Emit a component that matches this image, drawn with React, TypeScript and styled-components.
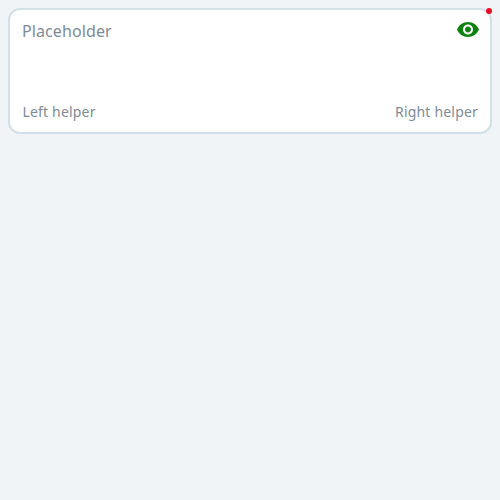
import React from "react";
import styled, { createGlobalStyle } from "styled-components";

const GlobalStyle = createGlobalStyle`
  body {
    margin: 0;
    padding: 8px;
    min-height: 100vh;
    box-sizing: border-box;
    background: #f0f4f7;
    font-family: "Noto Sans", sans-serif;
  }
`;

const Field = styled.label`
  position: relative;
  display: flex;
  flex-direction: column;
  justify-content: space-between;
  box-sizing: border-box;
  height: 126px;
  padding: 8px 12px 9px 12px;
  border: 2px solid #d1dfe6;
  border-radius: 12px;
  background: #ffffff;
  color: #7d8b95;
`;

const InputRow = styled.div`
  display: flex;
  justify-content: space-between;
  align-items: flex-start;
`;

const Placeholder = styled.span`
  font-size: 16px;
  line-height: 26px;
  letter-spacing: 0.1px;
`;

const HelperRow = styled.div`
  display: flex;
  justify-content: space-between;
  padding-left: 0.4px;
  font-size: 14px;
  line-height: 22px;
  letter-spacing: 0.19px;
`;

const EyeIcon = styled.svg`
  width: 24px;
  height: 24px;
  margin-right: -2px;
  fill: #0e8210;
`;

const RequiredDot = styled.span`
  position: absolute;
  top: -2px;
  right: -2px;
  width: 6px;
  height: 6px;
  border-radius: 50%;
  background: #ec0c25;
`;

export default function App() {
  return (
    <>
      <GlobalStyle />
      <Field>
        <RequiredDot />
        <InputRow>
          <Placeholder>Placeholder</Placeholder>
          <EyeIcon viewBox="0 0.5 24 24">
            <path d="M12 4.5C7 4.5 2.73 7.61 1 12c1.73 4.39 6 7.5 11 7.5s9.27-3.11 11-7.5c-1.73-4.39-6-7.5-11-7.5zM12 17c-2.76 0-5-2.24-5-5s2.24-5 5-5 5 2.24 5 5-2.24 5-5 5zm0-8c-1.66 0-3 1.34-3 3s1.34 3 3 3 3-1.34 3-3-1.34-3-3-3z" />
          </EyeIcon>
        </InputRow>
        <HelperRow>
          <span>Left helper</span>
          <span>Right helper</span>
        </HelperRow>
      </Field>
    </>
  );
}
